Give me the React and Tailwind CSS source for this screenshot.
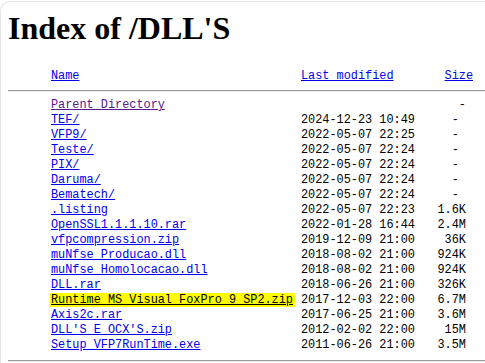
import React from "react";

const rows = [
  { name: "Parent Directory", date: "", size: "- ", visited: true },
  { name: "TEF/", date: "2024-12-23 10:49", size: "-  " },
  { name: "VFP9/", date: "2022-05-07 22:25", size: "-  " },
  { name: "Teste/", date: "2022-05-07 22:24", size: "-  " },
  { name: "PIX/", date: "2022-05-07 22:24", size: "-  " },
  { name: "Daruma/", date: "2022-05-07 22:24", size: "-  " },
  { name: "Bematech/", date: "2022-05-07 22:24", size: "-  " },
  { name: ".listing", date: "2022-05-07 22:23", size: "1.6K " },
  { name: "OpenSSL1.1.1.10.rar", date: "2022-01-28 16:44", size: "2.4M " },
  { name: "vfpcompression.zip", date: "2019-12-09 21:00", size: "36K " },
  { name: "muNfse_Producao.dll", date: "2018-08-02 21:00", size: "924K " },
  { name: "muNfse_Homolocacao.dll", date: "2018-08-02 21:00", size: "924K " },
  { name: "DLL.rar", date: "2018-06-26 21:00", size: "326K " },
  { name: "Runtime MS Visual FoxPro 9 SP2.zip", date: "2017-12-03 22:00", size: "6.7M ", hl: true },
  { name: "Axis2c.rar", date: "2017-06-25 21:00", size: "3.6M " },
  { name: "DLL'S E OCX'S.zip", date: "2012-02-02 22:00", size: "15M " },
  { name: "Setup_VFP7RunTime.exe", date: "2011-06-26 21:00", size: "3.5M " },
];

const mono = { fontFamily: '"Liberation Mono", "DejaVu Sans Mono", monospace' };

function Hr() {
  return <div className="h-[2px] border-t border-t-[#9a9a9a] border-b border-b-[#eeeeee]" />;
}

export default function App() {
  return (
    <div className="w-[485px] h-[363px] overflow-hidden bg-white pt-px">
      <div className="h-full border-t border-l border-[#e4e4e4] rounded-tl-[10px] pl-[7px]">
        <h1
          className="mt-[8px] text-[32px] leading-[37px] font-bold text-black"
          style={{ fontFamily: '"Liberation Serif", "Times New Roman", serif' }}
        >
          Index of /DLL'S
        </h1>
        <div
          className="mt-[22px] grid grid-cols-[43px_250px_114px_58px] text-[11.875px] leading-[15px] text-black whitespace-pre"
          style={mono}
        >
          <div />
          <div><span className="text-[#0000ee] underline">Name</span></div>
          <div><span className="text-[#0000ee] underline">Last modified</span></div>
          <div className="text-right"><span className="text-[#0000ee] underline">Size</span></div>
        </div>
        <div className="mt-[6px]"><Hr /></div>
        <div
          className="mt-[6px] flex flex-col text-[11.875px] leading-[15px] text-black whitespace-pre"
          style={mono}
        >
          {rows.map((r) => (
            <div key={r.name} className="grid grid-cols-[43px_250px_114px_58px] h-[15px]">
              <div />
              <div>
                {r.hl ? (
                  <span className="bg-[#ffff00] text-black underline pl-px pr-[2px] -ml-px">{r.name}</span>
                ) : (
                  <span className={(r.visited ? "text-[#551a8b]" : "text-[#0000ee]") + " underline"}>{r.name}</span>
                )}
              </div>
              <div>{r.date}</div>
              <div className="text-right">{r.size}</div>
            </div>
          ))}
        </div>
        <div className="mt-[7px]"><Hr /></div>
      </div>
    </div>
  );
}
